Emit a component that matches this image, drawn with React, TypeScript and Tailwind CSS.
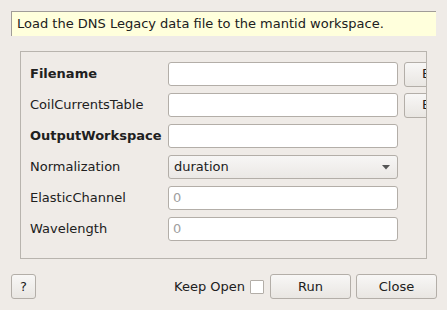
type Row = {
  label: string;
  bold?: boolean;
  kind: 'text' | 'file' | 'select' | 'number';
  value?: string;
};

const rows: Row[] = [
  { label: 'Filename', bold: true, kind: 'file' },
  { label: 'CoilCurrentsTable', kind: 'file' },
  { label: 'OutputWorkspace', bold: true, kind: 'text' },
  { label: 'Normalization', kind: 'select', value: 'duration' },
  { label: 'ElasticChannel', kind: 'number', value: '0' },
  { label: 'Wavelength', kind: 'number', value: '0' },
];

const btn =
  'h-[25px] rounded-[3px] border border-[#b3aea8] bg-gradient-to-b from-[#f8f7f6] to-[#e9e6e2] text-[13px] text-[#202020] flex items-center justify-center';

function Field({ row }: { row: Row }) {
  if (row.kind === 'select') {
    return (
      <div className="w-[230px] h-[24px] shrink-0 rounded-[3px] border border-[#b3aea8] bg-gradient-to-b from-[#f7f6f5] to-[#ebe8e5] flex items-center justify-between pl-[5px] pr-[7px]">
        <span>{row.value}</span>
        <svg width="8" height="5" viewBox="0 0 8 5">
          <path d="M0 0H8L4 4.5Z" fill="#555" />
        </svg>
      </div>
    );
  }
  return (
    <div className="w-[230px] h-[24px] shrink-0 rounded-[3px] border border-[#b3aea8] bg-white flex items-center pl-[4px] text-[#a0a0a0]">
      {row.value ?? ''}
    </div>
  );
}

export default function App() {
  return (
    <div
      className="w-[447px] h-[310px] bg-[#efebe7] text-[13px] text-[#202020] pt-[11px] pl-[11px] pr-[10px] overflow-hidden"
      style={{ fontFamily: '"DejaVu Sans", sans-serif' }}
    >
      {/* Description */}
      <div className="h-[25px] w-[425px] bg-[#ffffdc] border-l border-t border-[#a09c98] flex items-center pl-[5px]">
        Load the DNS Legacy data file to the mantid workspace.
      </div>

      {/* Properties group */}
      <div className="mt-[15px] ml-[9px] w-[407px] h-[208px] border border-[#b8b4ae] overflow-hidden pt-[10px] pl-[9px]">
        <div className="flex flex-col gap-[7px]">
          {rows.map((row) => (
            <div key={row.label} className="flex items-center h-[24px]">
              <div className={`w-[138px] shrink-0 ${row.bold ? 'font-bold' : ''}`}>{row.label}</div>
              <Field row={row} />
              {row.kind === 'file' && (
                <div className={`${btn} ml-[6px] w-[60px] shrink-0 justify-start pl-[17px]`}>Browse</div>
              )}
            </div>
          ))}
        </div>
      </div>

      {/* Bottom buttons */}
      <div className="mt-[15px] flex items-center">
        <div className={`${btn} w-[25px]`}>?</div>
        <div className="ml-auto flex items-center">
          <span>Keep Open</span>
          <div className="ml-[5px] w-[14px] h-[14px] border border-[#b3aea8] bg-white rounded-[1px]" />
          <div className={`${btn} ml-[6px] w-[81px] border-[#3f7fb5]`}>Run</div>
          <div className={`${btn} ml-[5px] w-[81px]`}>Close</div>
        </div>
      </div>
    </div>
  );
}
